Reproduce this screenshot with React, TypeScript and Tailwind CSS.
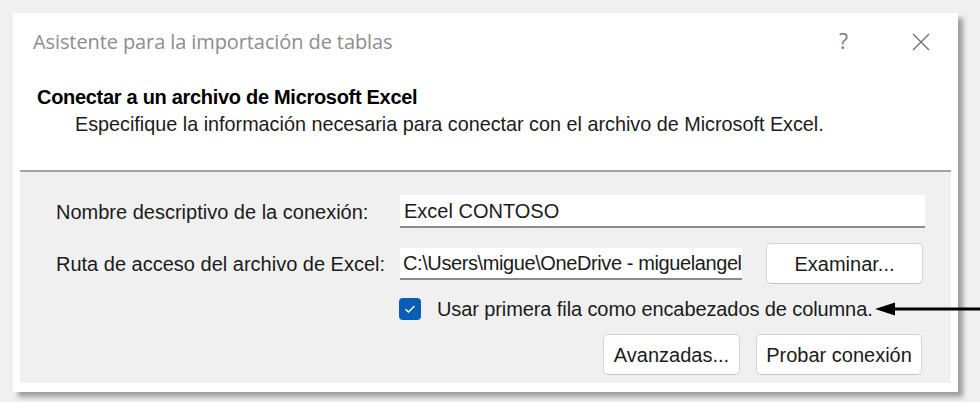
import React from "react";

const body = "font-['Liberation_Sans',Arial,sans-serif]";

const Boton = ({ label, className }: { label: string; className: string }) => (
    <button
        className={`h-[41px] rounded-[5px] border border-[#d4d4d4] border-b-[#c2c2c2] bg-white text-[20px] text-[#1b1b1b] ${className}`}
    >
        {label}
    </button>
);

export default function App() {
    return (
        <div className={`relative w-[980px] h-[402px] overflow-hidden bg-[#f0f0f0] pl-[13px] pt-[13px] ${body}`}>
            <div className="flex flex-col w-[945px] h-[379px] bg-white shadow-[5px_5px_5px_rgba(0,0,0,0.35)]">
                {/* barra de titulo */}
                <div className="flex items-center h-[56px] pl-[20px] pt-[2px] font-['Open_Sans','Noto_Sans',sans-serif]">
                    <span className="text-[20px] text-[#8d8d8d] tracking-[-0.1px]">Asistente para la importación de tablas</span>
                    <span className="ml-auto mr-[64px] text-[21px] text-[#7a7a7a]">?</span>
                    <svg className="mr-[28px]" width="18" height="18" viewBox="0 0 18 18">
                        <path d="M1 1 L17 17 M17 1 L1 17" stroke="#6f6f6f" strokeWidth="1.3" />
                    </svg>
                </div>

                {/* encabezado */}
                <div className="h-[101px] pt-[16px]">
                    <div className="pl-[24px] text-[20px] font-bold tracking-[-0.3px] text-black leading-[24px]">
                        Conectar a un archivo de Microsoft Excel
                    </div>
                    <div className="pl-[62px] mt-[3px] text-[19.8px] text-[#1b1b1b] leading-[24px]">
                        Especifique la información necesaria para conectar con el archivo de Microsoft Excel.
                    </div>
                </div>

                <div className="mx-[7px] h-[2px] bg-[#a3a3a3]" />

                {/* panel */}
                <div className="mx-[7px] mb-[9px] flex-1 bg-[#f0f0f0] pt-[23px] text-[20px] text-[#1b1b1b]">
                    <div className="flex items-center h-[33px]">
                        <span className="w-[380px] pl-[36px]">Nombre descriptivo de la conexión:</span>
                        <div className="flex items-center w-[525px] h-[33px] bg-white border-b-2 border-[#8c8c8c] pl-[4px]">
                            Excel CONTOSO
                        </div>
                    </div>

                    <div className="flex items-center h-[41px] mt-[15px]">
                        <span className="w-[380px] pl-[36px]">Ruta de acceso del archivo de Excel:</span>
                        <div className="flex items-center w-[342px] h-[32px] bg-white border-b-2 border-[#8c8c8c] pl-[3px] overflow-hidden whitespace-nowrap tracking-[-0.4px]">
                            C:\Users\migue\OneDrive - miguelangel
                        </div>
                        <Boton label="Examinar..." className="ml-[24px] w-[157px]" />
                    </div>

                    <div className="flex items-center h-[22px] mt-[14px] pl-[379px]">
                        <span className="flex items-center justify-center w-[22px] h-[22px] rounded-[4px] bg-[#0a5cb4]">
                            <svg width="12" height="10" viewBox="0 0 12 10">
                                <path d="M1.5 5.2 L4.5 8 L10.5 2" fill="none" stroke="white" strokeWidth="1.4" />
                            </svg>
                        </span>
                        <span className="ml-[16px] tracking-[-0.1px]">Usar primera fila como encabezados de columna.</span>
                    </div>

                    <div className="flex justify-end gap-[16px] mt-[14px] pr-[29px]">
                        <Boton label="Avanzadas..." className="w-[137px]" />
                        <Boton label="Probar conexión" className="w-[166px]" />
                    </div>
                </div>
            </div>

            {/* flecha */}
            <svg className="absolute left-[873px] top-[300px]" width="107" height="18" viewBox="0 0 107 18">
                <path d="M20 9 L107 9" stroke="black" strokeWidth="3" />
                <path d="M2 9 L22 2.5 L22 15.5 Z" fill="black" />
            </svg>
        </div>
    );
}
